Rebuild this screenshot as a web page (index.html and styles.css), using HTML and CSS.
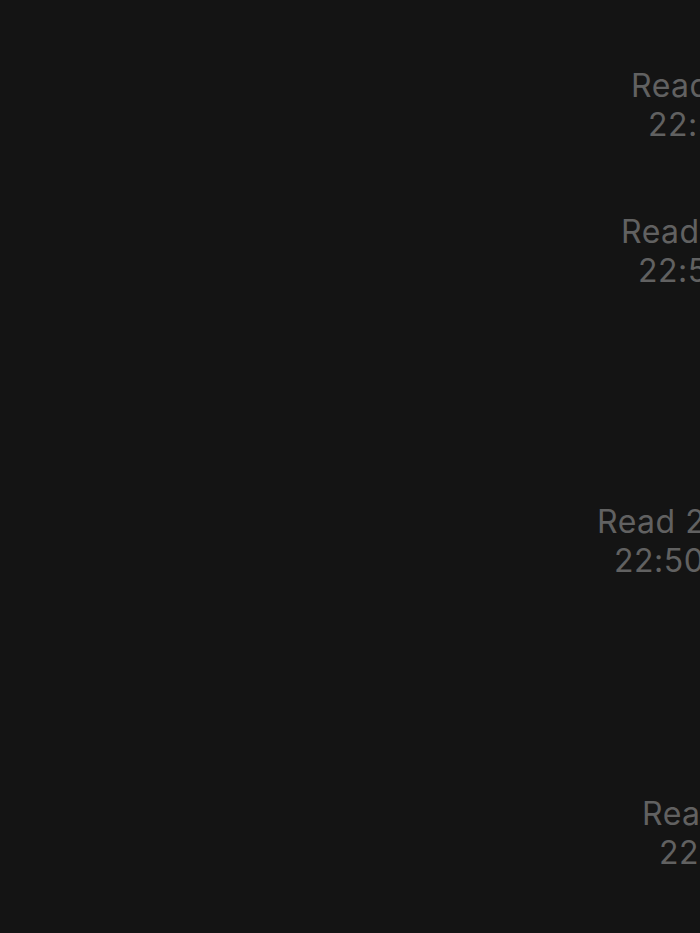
FILE: index.html
```html
<!DOCTYPE html>
<html>
<head lang="en">
    <meta charset="UTF-8">
    <title>Chat</title>
    <meta name="viewport" content="width=device-width, user-scalable=no, initial-scale=1.0"/>
    <link rel="stylesheet" href="styles.css">
</head>
<body>
    <div class="thread">
        <div class="msg msg-a">
            <div class="receipt">
                <span class="read">Read 2023/10/22</span>
                <span class="time">22:50</span>
            </div>
        </div>
        <div class="msg msg-b">
            <div class="receipt">
                <span class="read">Read 2023/10/22</span>
                <span class="time">22:50</span>
            </div>
        </div>
        <div class="msg msg-c">
            <div class="receipt">
                <span class="read">Read 2023/10/22</span>
                <span class="time">22:50</span>
            </div>
        </div>
        <div class="msg msg-d">
            <div class="receipt">
                <span class="read">Read 2023/10/22</span>
                <span class="time">22:50</span>
            </div>
        </div>
    </div>
</body>
</html>
```

FILE: styles.css
```css
* {
    margin: 0;
    padding: 0;
}
html,body{
    height:100%;
    overflow:hidden;
}
body{
    background:#141414;
    font-family: Inter, "Noto Sans", "Liberation Sans", sans-serif;
}
.thread{
    display:flex;
    flex-direction:column;
    padding-top:66px;
}
.msg{
    display:flex;
}
.msg-b{
    margin-top:68px;
}
.msg-c{
    margin-top:212px;
}
.msg-d{
    margin-top:214px;
}
.receipt{
    display:flex;
    flex-direction:column;
    flex-shrink:0;
    white-space:nowrap;
    color:#616161;
    font-size:32px;
    line-height:39px;
    letter-spacing:0.5px;
}
.receipt .time{
    padding-left:17px;
}
.msg-a .receipt{ margin-left:631px; }
.msg-b .receipt{ margin-left:621px; }
.msg-c .receipt{ margin-left:597px; }
.msg-d .receipt{ margin-left:642px; }
```
